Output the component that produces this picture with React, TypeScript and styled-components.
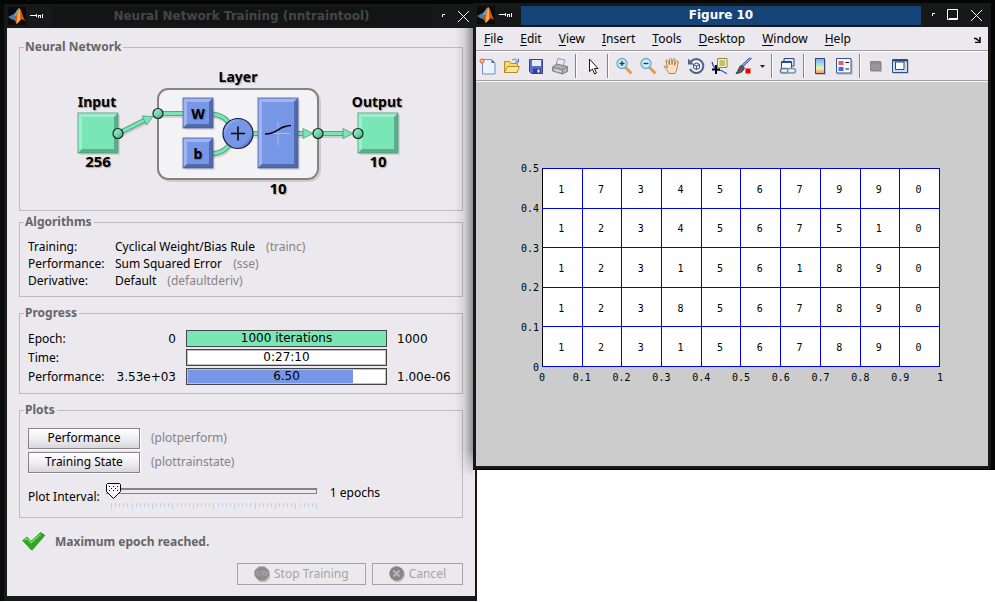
import React from "react";
import styled, { createGlobalStyle } from "styled-components";

const GlobalStyle = createGlobalStyle`
  * { box-sizing: border-box; }
  body {
    margin: 0;
    background: #fff;
    font: 12px/16px "Noto Sans", "Open Sans", sans-serif;
    color: #000;
  }
  button, input { font: inherit; color: inherit; }
`;

const Desktop = styled.div`
  display: grid;
  grid-template-columns: 477fr 518fr;
  align-items: start;
`;

const TrainingFrame = styled.section`
  background: #171918;
  border-top: 4px solid #050505;
  border-left: 4px solid #060a08;
  padding: 0 2px 5px 3px;
`;

const FigureFrame = styled.section`
  position: relative;
  margin-left: -4px;
  background: #171918;
  border-top: 3px solid #050505;
  border-right: 4px solid #050505;
  border-bottom: 1px solid #000;
  padding: 0 3px 3px 3px;
  &::before {
    content: "";
    position: absolute;
    right: 100%;
    top: 25px;
    bottom: -8px;
    width: 18px;
    background: linear-gradient(to left, rgba(0, 0, 0, 0.38), rgba(0, 0, 0, 0.09) 50%, transparent);
    mask-image: linear-gradient(#000 94%, transparent);
  }
`;

const TitleBar = styled.header`
  display: flex;
  align-items: center;
  height: 24px;
  color: #fff;
`;

const TitleIcons = styled.div`
  display: flex;
  align-items: center;
  gap: 4px;
  width: 45px;
  padding-left: 1px;
`;

const Title = styled.h1<{ $active?: boolean }>`
  flex: 1;
  margin: 0;
  text-align: center;
  font: bold 12px/19px "DejaVu Sans", sans-serif;
  color: ${(p) => (p.$active ? "#fff" : "#444746")};
  background: ${(p) => (p.$active ? "#154478" : "#131514")};
`;

const WindowControls = styled.div`
  display: flex;
  align-items: center;
  gap: 11px;
  padding-left: 11px;
  padding-right: 5px;
`;

const ControlButton = styled.button`
  display: flex;
  padding: 0;
  border: 0;
  background: none;
  color: #fff;
`;

const TrainingBody = styled.main`
  display: flex;
  flex-direction: column;
  background: #ebe9ed;
  padding: 11px 12px 11px 12px;
`;

const Group = styled.fieldset<{ $gap?: number }>`
  min-width: 0;
  margin: ${(p) => p.$gap ?? 0}px 0 0;
  padding: 8px 8px 7px;
  border: 1px solid #bcbabd;
`;

const Legend = styled.legend`
  margin-left: -4px;
  padding: 0 2px 0 1px;
  font-weight: bold;
  color: #666;
`;

const DiagramArea = styled.div`
  display: flex;
  justify-content: center;
  padding: 3px 0;
`;

const DiagramText = styled.text<{ $size?: number }>`
  font: bold ${(p) => p.$size ?? 14}px "Noto Sans", sans-serif;
  text-anchor: middle;
  text-shadow: 1px 1px 1px rgba(0, 0, 0, 0.3);
`;

const DetailRow = styled.div`
  display: grid;
  grid-template-columns: 87px 1fr;
  line-height: 17px;
`;

const Muted = styled.span<{ $gap?: number }>`
  margin-left: ${(p) => p.$gap ?? 0}px;
  color: #858387;
`;

const ProgressRow = styled.div`
  display: grid;
  grid-template-columns: 81px 67px 211px 1fr;
  align-items: center;
  height: 19px;
`;

const StartValue = styled.span`
  text-align: right;
  font-family: "DejaVu Sans", sans-serif;
`;

const EndValue = styled.span`
  padding-left: 10px;
  font-family: "DejaVu Sans", sans-serif;
`;

const Bar = styled.div<{ $fill: number; $color: string }>`
  height: 17px;
  margin-left: 10px;
  width: 201px;
  border: 1px solid #434343;
  box-shadow: inset 0 0 0 1px #c3c1c5;
  background: linear-gradient(${(p) => p.$color}, ${(p) => p.$color}) 1px 1px / ${(p) => p.$fill}% 100% no-repeat #fff;
  text-align: center;
  line-height: 14px;
  font-family: "DejaVu Sans", sans-serif;
`;

const PlotRow = styled.div`
  display: flex;
  align-items: center;
  gap: 11px;
  height: 24px;
`;

const PlotButton = styled.button`
  width: 112px;
  height: 21px;
  padding: 0 0 1px;
  border: 1px solid #858387;
  background: linear-gradient(#fff, #f1f0f3 45%, #d9d7dc);
  box-shadow: 1px 1px 0 #fff;
`;

const IntervalRow = styled.div`
  display: flex;
  align-items: center;
  gap: 6px;
  padding: 9px 0 0;
`;

const SliderColumn = styled.div`
  display: flex;
  flex-direction: column;
  gap: 4px;
  width: 211px;
`;

const IntervalValue = styled.output`
  align-self: flex-start;
  padding-left: 7px;
  line-height: 20px;
`;

const thumb = encodeURIComponent(
  '<svg xmlns="http://www.w3.org/2000/svg" width="15" height="16"><path d="M1.5.5h12l1 1v7L7.5 15.500.5 8.500v-7z" fill="#f4f3f5" stroke="#000"/><path d="M3 3h1v1H3zM7 3h1v1H7zM11 3h1v1h-1zM5 5h1v1H5zM9 5h1v1H9zM3 7h1v1H3zM7 7h1v1H7zM11 7h1v1h-1z"/></svg>'
);

const Slider = styled.input`
  appearance: none;
  width: 100%;
  height: 16px;
  margin: 0;
  background:
    linear-gradient(#858387, #858387) 100% 5px / 1px 6px no-repeat,
    linear-gradient(#858387 2px, #ebe9ed 2px 5px, #858387 5px) 0 5px / 100% 6px no-repeat;
  &::-webkit-slider-thumb {
    appearance: none;
    width: 15px;
    height: 16px;
    background: url("data:image/svg+xml,${thumb}") no-repeat;
  }
`;

const StatusRow = styled.div`
  display: flex;
  align-items: center;
  gap: 9px;
  margin: 14px 0 11px 3px;
  font-weight: bold;
  color: #666;
`;

const Actions = styled.div`
  display: flex;
  justify-content: flex-end;
  gap: 6px;
`;

const ActionButton = styled.button`
  display: flex;
  align-items: center;
  gap: 3px;
  height: 22px;
  padding: 0 16px;
  border: 1px solid #a5a3a7;
  background: #ebe9ed;
  color: #a5a3a7;
`;

const MenuBar = styled.nav`
  display: flex;
  align-items: center;
  gap: 17px;
  height: 24px;
  padding: 0 7px 0 8px;
  background: #ebe9ed;
  border-bottom: 1px solid #a09ea2;
`;

const MenuItem = styled.button`
  padding: 0;
  border: 0;
  background: none;
  u { text-underline-offset: 2px; }
`;

const MenuSpacer = styled.span`
  flex: 1;
`;

const ToolBar = styled.div`
  display: flex;
  align-items: center;
  height: 30px;
  border-top: 1px solid #fff;
  border-bottom: 1px solid #a3a1a4;
  background: #ebe9ed;
`;

const ToolButton = styled.button<{ $narrow?: boolean }>`
  display: flex;
  justify-content: center;
  width: ${(p) => (p.$narrow ? 12 : 24)}px;
  padding: 0;
  border: 0;
  background: none;
`;

const ToolDivider = styled.span`
  width: 2px;
  height: 24px;
  margin: 0 3px;
  background: linear-gradient(to right, #858387 50%, #fff 50%);
`;

const Canvas = styled.main`
  border-top: 1px solid #f6f6f6;
  background: #ccc;
  padding: 86px 0 81px;
`;

const Plot = styled.div`
  display: grid;
  grid-template-columns: 66fr 398fr 48fr;
`;

const YAxis = styled.div`
  display: flex;
  flex-direction: column;
  justify-content: space-between;
  margin: -5px 0 -7px;
  padding-right: 3px;
  text-align: right;
  font: 10px/12px "DejaVu Sans Mono", monospace;
`;

const XAxis = styled.div`
  grid-column: 2;
  display: flex;
  justify-content: space-between;
  height: 18px;
  padding-top: 5px;
  font: 10px/12px "DejaVu Sans Mono", monospace;
`;

const XTick = styled.span`
  display: flex;
  justify-content: center;
  width: 0;
`;

const DigitTable = styled.table`
  width: 100%;
  height: 199px;
  table-layout: fixed;
  border-collapse: collapse;
  background: #fff;
  font: 10px/12px "DejaVu Sans Mono", monospace;
  text-align: center;
  td {
    padding: 3px 2px 0 0;
    border: 1px solid #0000f0;
  }
  td:first-child { border-left-color: #000; }
`;

const digits = ["1734567990", "1234567510", "1231561890", "1238567890", "1231567890"];

const MatlabLogo = () => (
  <svg width="18" height="18" viewBox="0 0 18 18">
    <rect width="18" height="18" fill="#0b0b0b" />
    <path d="M0 10 5 7.500 8 10 5 13z" fill="#3a86b4" />
    <path d="M5 7.500C8 6.500 9 1.500 11.500 1L8 12 5 13 8 10z" fill="#79a7bb" />
    <path d="M5 13c3-1 4.500-9 6.500-12 2 1 3 9 6 13-2-1-3-2-4.500-1S10 16 8.500 17C8 15 7 13 5 13z" fill="#d9521c" />
    <path d="M11.500 1C9.500 5 9 11 8.500 17c1.500-1 3-3 3.500-4 .5-4 0-9-.5-12z" fill="#f5b13c" />
  </svg>
);

const Pin = () => (
  <svg width="14" height="8" viewBox="0 0 14 8">
    <path d="M0 3.500h6M6.500 2v3M8.500 3v3M8 3.500h2M10.500 3v3M12.500 2v4" stroke="#fff" fill="none" />
  </svg>
);

const MinimizeGlyph = () => (
  <svg width="4" height="4" viewBox="0 0 4 4"><path d="M.5 3V.5H3" stroke="#fff" fill="none" /></svg>
);
const MaximizeGlyph = () => (
  <svg width="12" height="12" viewBox="0 0 12 12"><path d="M.5.5h10v10H.5zM2 9.500h8" stroke="#fff" fill="none" /></svg>
);
const CloseGlyph = () => (
  <svg width="13" height="13" viewBox="0 0 13 13"><path d="m1 1 11 11M12 1 1 12" stroke="#fff" /></svg>
);

type BoxProps = { x: number; y: number; w: number; h: number; tone: "green" | "blue" };
const tones = {
  green: { fill: "#7ae6b6", light: "#9cf0cd", dark: "#57b089", edge: "#4b9a78" },
  blue: { fill: "#7796e6", light: "#9fb4f0", dark: "#5169ad", edge: "#48599a" },
};
const BevelBox = ({ x, y, w, h, tone }: BoxProps) => {
  const t = tones[tone];
  const b = 4;
  return (
    <g transform={`translate(${x} ${y})`}>
      <rect x="2" y="2" width={w} height={h} fill="#000" opacity=".1" />
      <rect width={w} height={h} fill={t.fill} />
      <path d={`M0 0H${w}L${w - b} ${b}H${b}V${h - b}L0 ${h}z`} fill={t.light} />
      <path d={`M${w} ${h}H0L${b} ${h - b}H${w - b}V${b}L${w} 0z`} fill={t.dark} />
      <rect width={w} height={h} fill="none" stroke={t.edge} strokeWidth=".8" />
    </g>
  );
};

const Wire = ({ d }: { d: string }) => (
  <g fill="none">
    <path d={d} stroke="#000" strokeWidth="5" opacity=".12" transform="translate(1 2)" />
    <path d={d} stroke="#56a683" strokeWidth="5" />
    <path d={d} stroke="#7ae6b6" strokeWidth="3" />
  </g>
);

const Port = ({ x, y }: { x: number; y: number }) => (
  <circle cx={x} cy={y} r="5" fill="url(#port)" stroke="#15251f" strokeWidth="1.200" />
);

const NetworkDiagram = () => (
  <svg width="336" height="134" viewBox="73 66 336 134" role="img" aria-label="Network with one layer">
    <defs>
      <linearGradient id="port" x1="0" y1="0" x2="1" y2="1">
        <stop offset="0" stopColor="#a5f2d2" />
        <stop offset=".5" stopColor="#74d9ab" />
        <stop offset="1" stopColor="#4f9c7b" />
      </linearGradient>
      <linearGradient id="sum" x1="0" y1="0" x2="1" y2="1">
        <stop offset="0" stopColor="#a9bdf5" />
        <stop offset=".35" stopColor="#7796e6" />
        <stop offset=".7" stopColor="#7796e6" />
        <stop offset="1" stopColor="#43589c" />
      </linearGradient>
    </defs>
    <rect x="160" y="91" width="160" height="90" rx="11" fill="none" stroke="#000" strokeWidth="2" opacity=".12" />
    <rect x="157" y="88" width="162" height="92" rx="12" fill="#fff" />
    <rect x="158" y="89" width="160" height="90" rx="10" fill="#f3f2f5" stroke="#83837f" strokeWidth="2" />
    <BevelBox x={78} y={113} w={40} h={40} tone="green" />
    <BevelBox x={358} y={113} w={40} h={40} tone="green" />
    <Wire d="M118 133.500 145 120" />
    <Wire d="M158 113.500H184" />
    <Wire d="M212 114c10 1 15 5 20 13M212 154c10-1 15-5 20-13" />
    <Wire d="M250 133.500H260M297 133.500h7" />
    <Wire d="M318 133.500h26" />
    <path d="m142 116 11 .5-6.500 8.500zM303 128.500v10l10-5zM343 128.500v10l10-5z" fill="#7ae6b6" stroke="#4d9878" strokeWidth=".8" />
    <BevelBox x={183} y={98} w={30} h={30} tone="blue" />
    <BevelBox x={183} y={138} w={30} h={30} tone="blue" />
    <BevelBox x={258} y={98} w={40} h={70} tone="blue" />
    <circle cx="238" cy="133.500" r="15" fill="url(#sum)" stroke="#141c38" strokeWidth="1.200" />
    <circle cx="238" cy="133.500" r="12" fill="#7796e6" />
    <path d="M231 133.500h14M238 126.500v14" stroke="#000" strokeWidth="1.500" />
    <path d="M278 121.500v24M267 133.500h23" stroke="#a8bbf2" strokeWidth="1" />
    <path d="M265 134c14 0 12-8 26-8.500" fill="none" stroke="#000" strokeWidth="1.500" />
    <Port x={118} y={133.5} />
    <Port x={158} y={113.5} />
    <Port x={318} y={133.5} />
    <Port x={358} y={133.5} />
    <DiagramText x="97" y="107">Input</DiagramText>
    <DiagramText x="238" y="82">Layer</DiagramText>
    <DiagramText x="377" y="107">Output</DiagramText>
    <DiagramText x="198" y="119">W</DiagramText>
    <DiagramText x="198" y="159">b</DiagramText>
    <DiagramText x="98" y="167" $size={15}>256</DiagramText>
    <DiagramText x="378" y="167" $size={15}>10</DiagramText>
    <DiagramText x="278" y="194" $size={15}>10</DiagramText>
  </svg>
);

const Ticks = () => (
  <svg width="211" height="7" viewBox="0 0 211 7">
    {Array.from({ length: 51 }, (_, i) => (
      <path key={i} d={`M${5.5 + Math.round(i * 4.1)} 0v${i % 5 === 0 ? 6 : 4}`} stroke="#bdd0e6" />
    ))}
  </svg>
);

const CheckIcon = () => (
  <svg width="24" height="20" viewBox="0 0 24 20">
    <path d="M2.500 9.500 6 7l4 4.500L19.500 1.500l4 2L10.500 19z" fill="#777" opacity=".5" />
    <path d="M.8 8.500 5 5l4 4.500L18.500.6l4 2.600L9.500 18z" fill="#2aac1c" stroke="#1d8812" strokeWidth=".8" />
    <path d="M2.500 8.300 5 6.300l4 4.500L18.700 2" fill="none" stroke="#79dc62" strokeWidth="1.200" />
  </svg>
);

const StopIcon = () => (
  <svg width="17" height="17" viewBox="0 0 17 17">
    <path d="M6 2h6l4 4v6l-4 4H6l-4-4V6z" fill="#bbb" />
    <path d="M5 .5h5.500l4.500 4V10l-4.500 4.500H5L.5 10V4.500z" fill="#8d8d8d" />
    <path d="M4.500 5.500h-2v2h2v2h-2M5.500 5.500h3M7 5.500V10M11 5.500H9.500v4H11zM12.500 10V5.500h1.500v2h-1.500" fill="none" stroke="#a8a8a8" strokeWidth=".8" />
  </svg>
);

const CancelIcon = () => (
  <svg width="17" height="17" viewBox="0 0 17 17">
    <circle cx="8.500" cy="8.500" r="7.500" fill="#bbb" />
    <circle cx="7.500" cy="7.500" r="7.200" fill="#858585" />
    <path d="m4.500 4.500 6 6M10.500 4.500l-6 6" stroke="#b5b5b5" strokeWidth="2.200" />
  </svg>
);

const toolArt: Record<string, React.ReactNode> = {
  "New Figure": (
    <>
      <path d="M3.500 2.500h9l3.500 3.500v11H3.500z" fill="#e9f4fd" stroke="#6f8fc4" />
      <path d="M12.500 2.500V6H16z" fill="#47669c" />
      <path d="M3 1v6M0 4h6M1 2l4 4M5 2 1 6" stroke="#e2622b" strokeWidth=".8" />
      <circle cx="3" cy="4" r="1.500" fill="#fbe3a0" stroke="#e2622b" strokeWidth=".7" />
    </>
  ),
  Open: (
    <>
      <path d="M1.500 15.500v-11h5l1.500 2h6.500v9z" fill="#f7d873" stroke="#bd8c23" />
      <path d="M1.500 15.500 4.500 9.500h12l-2.500 6z" fill="#fbe79b" stroke="#bd8c23" />
      <path d="M9 3.500c2-2 4-2 5.500.5M15.500 1.500V5H12" fill="none" stroke="#4a6f9e" />
    </>
  ),
  Save: (
    <>
      <path d="M2.500 2.500h13v14h-11l-2-2z" fill="#5a6fd0" stroke="#323f94" />
      <path d="M5 3h9v6H5z" fill="#e4ebfa" />
      <path d="M6 11.500h8v5H6z" fill="#323f94" />
      <path d="M10.500 12.500h2v3h-2z" fill="#fff" />
    </>
  ),
  Print: (
    <>
      <path d="m5 8 2-6.500 7 1.500-2 6z" fill="#dcecf8" stroke="#7d8899" strokeWidth=".8" />
      <path d="m1.500 10 4-3 11 2.500v5l-5 2.500-10-3z" fill="#b1b1b5" stroke="#6d6d72" strokeWidth=".8" />
      <path d="m1.500 10 10 2.500 5-3M11.500 12.500V17" stroke="#77777c" fill="none" strokeWidth=".8" />
      <path d="m4 13 6 1.500" stroke="#eee" />
    </>
  ),
  Select: <path d="M6.500 2v12.500l3-2.500 2 5 2-1-2-4.500h3.500z" fill="#fff" stroke="#000" strokeWidth=".9" />,
  "Zoom In": (
    <>
      <path d="m10.500 10.500 6 6" stroke="#e09a54" strokeWidth="3" />
      <circle cx="7" cy="6.500" r="5" fill="#c8ecf8" stroke="#70a8cd" strokeWidth="1.300" />
      <path d="M4.500 6.500h5M7 4v5" stroke="#17417c" strokeWidth="1.300" />
    </>
  ),
  "Zoom Out": (
    <>
      <path d="m10.500 10.500 6 6" stroke="#e09a54" strokeWidth="3" />
      <circle cx="7" cy="6.500" r="5" fill="#c8ecf8" stroke="#70a8cd" strokeWidth="1.300" />
      <path d="M4.500 6.500h5" stroke="#17417c" strokeWidth="1.300" />
    </>
  ),
  Pan: (
    <path d="M6 16.500C5 14 2.500 11.500 1 9.500c1-1 2-.5 3.500 1.500L3 4c0-1.500 1.500-1.500 2 0l1.500 4L6.500 2.500c0-1.500 1.800-1.500 2 0L9 7.500l1-5c.3-1.300 2-1.200 2 .3l-.5 5.500 1.800-3.800c.5-1.200 2.200-.7 1.900.5-1 4-1 9-3.200 11.500z" fill="#fde0bd" stroke="#ab7547" strokeWidth=".9" />
  ),
  Rotate: (
    <>
      <path d="M4 4.500a7 7 0 1 1-1 7.500" fill="none" stroke="#4c6585" strokeWidth="2" />
      <path d="M1 1.500v6h6z" fill="#4c6585" />
      <path d="m6.500 7.500 3-1.500 3 1.500v3.500l-3 1.500-3-1.500zM6.500 7.500l3 1.500 3-1.500M9.500 9v3.500" fill="#e1ebf5" stroke="#2f4664" strokeWidth=".9" />
    </>
  ),
  "Data Cursor": (
    <>
      <path d="M6.500 1.500h9.500v9H6.500z" fill="#faf3b0" stroke="#938b3a" />
      <path d="M8.500 4h5.500M8.500 6h5.500M8.500 8h5.500" stroke="#8d8748" />
      <path d="M1 5c1 4 3 8 7 8s5 3 8 3.500" fill="none" stroke="#2a38e0" strokeWidth="1.200" />
      <path d="M5 8v9M1 12.500h8" stroke="#000" strokeWidth="2" />
    </>
  ),
  Brush: (
    <>
      <path d="m16.500 1.500-9 9-1.500-1.500 8-8z" fill="#8aa0e8" stroke="#3d4fa8" strokeWidth=".8" />
      <path d="m6.500 8 3 3c-1 3-4 5.500-8.500 5.500C3.500 14 3.500 10 6.500 8z" fill="#5d5a58" stroke="#2c2a29" strokeWidth=".8" />
      <path d="M10.500 11.500h5v5h-5z" fill="#f00000" />
    </>
  ),
  Link: (
    <>
      <path d="M5 1.500h10v7.500H5z" fill="#d6e6f7" stroke="#2d4c7c" />
      <path d="M2.500 4.500h10V12h-10z" fill="#f8fbff" stroke="#2d4c7c" />
      <path d="M2.500 5.500h10" stroke="#2d4c7c" />
      <rect x="1.500" y="11.500" width="8" height="4.500" rx="2.200" fill="#e6eef5" stroke="#627c93" strokeWidth="1.500" />
      <rect x="8.500" y="11.500" width="8" height="4.500" rx="2.200" fill="#e6eef5" stroke="#7b93a8" strokeWidth="1.500" />
    </>
  ),
  Colorbar: (
    <>
      <path d="M5 3h10v15H5z" fill="#999" opacity=".5" />
      <rect x="4.500" y="1.500" width="9" height="15" fill="url(#spectrum)" stroke="#34467c" />
    </>
  ),
  Legend: (
    <>
      <path d="M2 3h16v15H2z" fill="#999" opacity=".4" />
      <path d="M1.500 1.500h14.500v14.500H1.500z" fill="#f3f7fd" stroke="#34568c" />
      <path d="M3.500 4h5v4h-5z" fill="#e66060" />
      <path d="M3.500 10h5v4h-5z" fill="#5c62e2" />
      <path d="M10.500 5.500H14M10.500 12H14" stroke="#111" strokeWidth="1.200" />
    </>
  ),
  "Hide Plot Tools": (
    <>
      <path d="M4 5h11v10H4z" fill="#b9b9b9" />
      <path d="M3.500 4.500h10v9h-10z" fill="#979797" stroke="#868686" />
      <path d="M3 6h11" stroke="#878787" />
    </>
  ),
  "Show Plot Tools": (
    <>
      <path d="M2 3h16v14H2z" fill="#999" opacity=".4" />
      <path d="M1.500 2.500h15v13h-15z" fill="#cddcee" stroke="#2d4c84" />
      <path d="M2 3.500h14" stroke="#2d4c84" strokeWidth="2" />
      <path d="M4.500 5h8.500v7.500H4.500z" fill="#fff" stroke="#2d4c84" />
    </>
  ),
};

const Tool = ({ name }: { name: string }) => (
  <ToolButton aria-label={name}>
    <svg width="18" height="18" viewBox="0 0 18 18">
      <defs>
        <linearGradient id="spectrum" x1="0" y1="0" x2="0" y2="1">
          <stop offset="0" stopColor="#9b9ef0" />
          <stop offset=".35" stopColor="#8be2ec" />
          <stop offset=".65" stopColor="#fbeb9a" />
          <stop offset="1" stopColor="#f08f84" />
        </linearGradient>
      </defs>
      {toolArt[name]}
    </svg>
  </ToolButton>
);

const Controls = ({ maximizable }: { maximizable?: boolean }) => (
  <WindowControls>
    <ControlButton aria-label="Minimize"><MinimizeGlyph /></ControlButton>
    {maximizable && <ControlButton aria-label="Maximize"><MaximizeGlyph /></ControlButton>}
    <ControlButton aria-label="Close"><CloseGlyph /></ControlButton>
  </WindowControls>
);

const TrainingWindow = () => (
  <TrainingFrame>
    <TitleBar>
      <TitleIcons><MatlabLogo /><Pin /></TitleIcons>
      <Title>Neural Network Training (nntraintool)</Title>
      <Controls />
    </TitleBar>
    <TrainingBody>
      <Group>
        <Legend>Neural Network</Legend>
        <DiagramArea><NetworkDiagram /></DiagramArea>
      </Group>
      <Group $gap={3}>
        <Legend>Algorithms</Legend>
        <DetailRow><span>Training:</span><span>Cyclical Weight/Bias Rule <Muted $gap={8}>(trainc)</Muted></span></DetailRow>
        <DetailRow><span>Performance:</span><span>Sum Squared Error <Muted $gap={8}>(sse)</Muted></span></DetailRow>
        <DetailRow><span>Derivative:</span><span>Default <Muted $gap={8}>(defaultderiv)</Muted></span></DetailRow>
      </Group>
      <Group $gap={8}>
        <Legend>Progress</Legend>
        <ProgressRow>
          <span>Epoch:</span><StartValue>0</StartValue>
          <Bar role="progressbar" aria-label="Epoch" $fill={99} $color="#7ae6b6">1000 iterations</Bar>
          <EndValue>1000</EndValue>
        </ProgressRow>
        <ProgressRow>
          <span>Time:</span><StartValue />
          <Bar role="progressbar" aria-label="Time" $fill={0} $color="#fff">0:27:10</Bar>
          <EndValue />
        </ProgressRow>
        <ProgressRow>
          <span>Performance:</span><StartValue>3.53e+03</StartValue>
          <Bar role="progressbar" aria-label="Performance" $fill={83} $color="#7796e6">6.50</Bar>
          <EndValue>1.00e-06</EndValue>
        </ProgressRow>
      </Group>
      <Group $gap={8}>
        <Legend>Plots</Legend>
        <PlotRow><PlotButton>Performance</PlotButton><Muted>(plotperform)</Muted></PlotRow>
        <PlotRow><PlotButton>Training State</PlotButton><Muted>(plottrainstate)</Muted></PlotRow>
        <IntervalRow>
          <label htmlFor="interval">Plot Interval:</label>
          <SliderColumn>
            <Slider id="interval" type="range" min={1} max={100} defaultValue={1} />
            <Ticks />
          </SliderColumn>
          <IntervalValue htmlFor="interval">1 epochs</IntervalValue>
        </IntervalRow>
      </Group>
      <StatusRow><CheckIcon />Maximum epoch reached.</StatusRow>
      <Actions>
        <ActionButton disabled><StopIcon />Stop Training</ActionButton>
        <ActionButton disabled><CancelIcon />Cancel</ActionButton>
      </Actions>
    </TrainingBody>
  </TrainingFrame>
);

const menus = ["File", "Edit", "View", "Insert", "Tools", "Desktop", "Window", "Help"];

const FigureWindow = () => (
  <FigureFrame>
    <TitleBar>
      <TitleIcons><MatlabLogo /><Pin /></TitleIcons>
      <Title $active>Figure 10</Title>
      <Controls maximizable />
    </TitleBar>
    <MenuBar>
      {menus.map((m) => (
        <MenuItem key={m}><u>{m[0]}</u>{m.slice(1)}</MenuItem>
      ))}
      <MenuSpacer />
      <MenuItem aria-label="Dock Figure">
        <svg width="7" height="6" viewBox="0 0 7 6"><path d="M0 1.500h2L5 4M6 0v5.500H1" fill="none" stroke="#000" strokeWidth="1.500" /></svg>
      </MenuItem>
    </MenuBar>
    <ToolBar>
      <Tool name="New Figure" /><Tool name="Open" /><Tool name="Save" /><Tool name="Print" />
      <ToolDivider />
      <Tool name="Select" />
      <ToolDivider />
      <Tool name="Zoom In" /><Tool name="Zoom Out" /><Tool name="Pan" />
      <Tool name="Rotate" /><Tool name="Data Cursor" /><Tool name="Brush" />
      <ToolButton $narrow aria-label="Brush options">
        <svg width="5" height="3" viewBox="0 0 5 3"><path d="M0 0h5L2.500 3z" fill="#222" /></svg>
      </ToolButton>
      <ToolDivider />
      <Tool name="Link" />
      <ToolDivider />
      <Tool name="Colorbar" /><Tool name="Legend" />
      <ToolDivider />
      <Tool name="Hide Plot Tools" /><Tool name="Show Plot Tools" />
    </ToolBar>
    <Canvas>
      <Plot>
        <YAxis>
          {["0.5", "0.4", "0.3", "0.2", "0.1", "0"].map((v) => <span key={v}>{v}</span>)}
        </YAxis>
        <DigitTable>
          <tbody>
            {digits.map((row, r) => (
              <tr key={r}>{row.split("").map((d, c) => <td key={c}>{d}</td>)}</tr>
            ))}
          </tbody>
        </DigitTable>
        <XAxis>
          {["0", "0.1", "0.2", "0.3", "0.4", "0.5", "0.6", "0.7", "0.8", "0.9", "1"].map((v) => (
            <XTick key={v}>{v}</XTick>
          ))}
        </XAxis>
      </Plot>
    </Canvas>
  </FigureFrame>
);

export default function App() {
  return (
    <>
      <GlobalStyle />
      <Desktop>
        <TrainingWindow />
        <FigureWindow />
      </Desktop>
    </>
  );
}
